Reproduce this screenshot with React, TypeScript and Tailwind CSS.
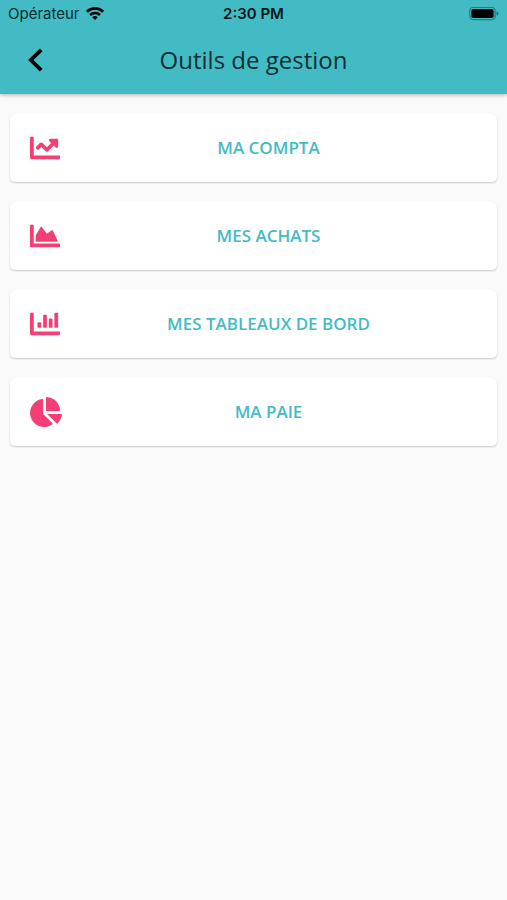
import type { IconType } from "react-icons";
import { FaChartArea, FaChartBar, FaChartLine, FaChartPie } from "react-icons/fa";

const tools: { label: string; icon: IconType; iconClass: string }[] = [
  { label: "MA COMPTA", icon: FaChartLine, iconClass: "w-[30px]" },
  { label: "MES ACHATS", icon: FaChartArea, iconClass: "w-[30px]" },
  { label: "MES TABLEAUX DE BORD", icon: FaChartBar, iconClass: "w-[30px]" },
  { label: "MA PAIE", icon: FaChartPie, iconClass: "w-8" },
];

function WifiIcon() {
  return (
    <svg viewBox="0 0 18 14" className="h-[14px] w-[18px]" aria-hidden="true">
      <g fill="none" stroke="#000" strokeWidth="2.6">
        <path d="M0.9 4.7a11.6 11.6 0 0 1 16.2 0" />
        <path d="M4 8a7.2 7.2 0 0 1 10 0" />
      </g>
      <path d="M6.2 10.2a4.1 4.1 0 0 1 5.6 0L9 13z" />
    </svg>
  );
}

function BatteryIcon() {
  return (
    <svg viewBox="0 0 30 14" className="h-[14px] w-[30px]" aria-hidden="true">
      <rect x="0.8" y="0.3" width="25.4" height="12.4" rx="3.6" fill="none" stroke="#23808a" strokeWidth="1.3" />
      <rect x="2.4" y="1.9" width="22.2" height="9.2" rx="1.8" />
      <path d="M27.6 4.3v4.4c2.4-1 2.4-3.4 0-4.4z" fill="#176e75" />
    </svg>
  );
}

function StatusBar() {
  return (
    <div className="grid h-7 grid-cols-3 items-center px-2 font-[Inter,sans-serif] text-[15px] text-[#0b2d30]">
      <div className="flex items-center gap-1.5">
        <span>Opérateur</span>
        <WifiIcon />
      </div>
      <span className="text-center font-semibold text-[#061719]">2:30 PM</span>
      <div className="flex justify-end">
        <BatteryIcon />
      </div>
    </div>
  );
}

export default function App() {
  return (
    <div className="min-h-screen bg-[#fafafa] font-['Open_Sans',sans-serif]">
      <header className="bg-[#43bbc5] pb-0.5 shadow-[0_1px_4px_rgba(0,0,0,0.3)]">
        <StatusBar />
        <div className="grid h-16 grid-cols-[60px_1fr_60px] items-center">
          <button type="button" aria-label="Retour" className="flex h-12 items-center pl-7">
            <svg viewBox="0 0 15 24" className="h-6 w-[15px]" aria-hidden="true">
              <path d="M13.2 1.8 2.8 12l10.4 10.2" fill="none" stroke="#000" strokeWidth="3.8" />
            </svg>
          </button>
          <h1 className="text-center text-2xl text-[#122f32]">Outils de gestion</h1>
        </div>
      </header>

      <main className="flex flex-col gap-5 px-2.5 py-5">
        {tools.map(({ label, icon: Icon, iconClass }) => (
          <button
            key={label}
            type="button"
            className="flex h-17 w-full items-center rounded-[5px] bg-white px-5 shadow-[0_1px_2px_rgba(0,0,0,0.2)]"
          >
            <span className="flex w-[30px] shrink-0">
              <Icon className={`h-[30px] shrink-0 text-[#f43f74] ${iconClass}`} aria-hidden="true" />
            </span>
            <span className="flex-1 text-center text-[17px] font-semibold text-[#43bbc5]">{label}</span>
          </button>
        ))}
      </main>
    </div>
  );
}
